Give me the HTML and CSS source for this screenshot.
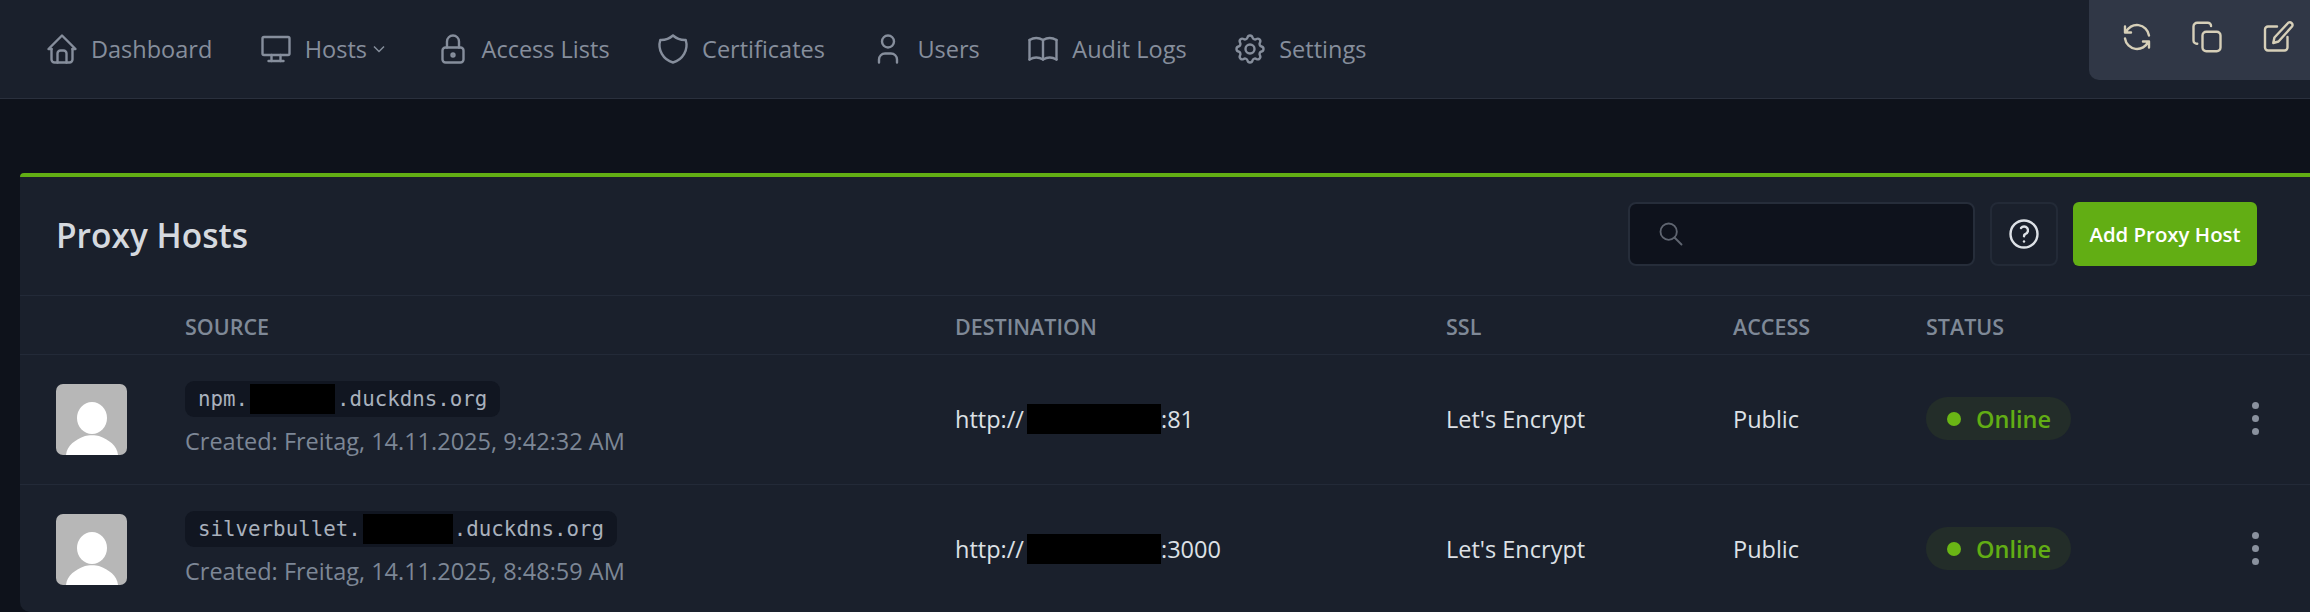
FILE: index.html
```html
<!DOCTYPE html>
<html lang="en">

<head>
    <meta charset="UTF-8">
    <meta name="viewport" content="width=device-width, initial-scale=1.0">
    <title>Proxy Hosts</title>
    <link rel="stylesheet" href="styles.css">
</head>

<body>
    <div class="header">
        <a class="navItem">
            <svg class="icon" viewBox="0 0 24 24"><path d="M5 12l-2 0l9 -9l9 9l-2 0" /><path d="M5 12v7a2 2 0 0 0 2 2h10a2 2 0 0 0 2 -2v-7" /><path d="M9 21v-6a2 2 0 0 1 2 -2h2a2 2 0 0 1 2 2v6" /></svg>
            <span>Dashboard</span>
        </a>
        <a class="navItem">
            <svg class="icon" viewBox="0 0 24 24"><path d="M3 5a1 1 0 0 1 1 -1h16a1 1 0 0 1 1 1v10a1 1 0 0 1 -1 1h-16a1 1 0 0 1 -1 -1v-10z" /><path d="M7 20h10" /><path d="M9 16v4" /><path d="M15 16v4" /></svg>
            <span>Hosts</span>
            <svg class="chevron" viewBox="0 0 24 24"><path d="M6 9l6 6l6 -6" /></svg>
        </a>
        <a class="navItem">
            <svg class="icon" viewBox="0 0 24 24"><path d="M5 13a2 2 0 0 1 2 -2h10a2 2 0 0 1 2 2v6a2 2 0 0 1 -2 2h-10a2 2 0 0 1 -2 -2v-6z" /><path d="M11 16a1 1 0 1 0 2 0a1 1 0 0 0 -2 0" /><path d="M8 11v-4a4 4 0 1 1 8 0v4" /></svg>
            <span>Access Lists</span>
        </a>
        <a class="navItem">
            <svg class="icon" viewBox="0 0 24 24"><path d="M12 3a12 12 0 0 0 8.5 3a12 12 0 0 1 -8.5 15a12 12 0 0 1 -8.5 -15a12 12 0 0 0 8.5 -3" /></svg>
            <span>Certificates</span>
        </a>
        <a class="navItem">
            <svg class="icon" viewBox="0 0 24 24"><path d="M8 7a4 4 0 1 0 8 0a4 4 0 0 0 -8 0" /><path d="M6 21v-2a4 4 0 0 1 4 -4h4a4 4 0 0 1 4 4v2" /></svg>
            <span>Users</span>
        </a>
        <a class="navItem">
            <svg class="icon" viewBox="0 0 24 24"><path d="M3 19a9 9 0 0 1 9 0a9 9 0 0 1 9 0" /><path d="M3 6a9 9 0 0 1 9 0a9 9 0 0 1 9 0" /><path d="M3 6l0 13" /><path d="M12 6l0 13" /><path d="M21 6l0 13" /></svg>
            <span>Audit Logs</span>
        </a>
        <a class="navItem">
            <svg class="icon" viewBox="0 0 24 24"><path d="M10.325 4.317c.426 -1.756 2.924 -1.756 3.35 0a1.724 1.724 0 0 0 2.573 1.066c1.543 -.94 3.31 .826 2.37 2.37a1.724 1.724 0 0 0 1.065 2.572c1.756 .426 1.756 2.924 0 3.35a1.724 1.724 0 0 0 -1.066 2.573c.94 1.543 -.826 3.31 -2.37 2.37a1.724 1.724 0 0 0 -2.572 1.065c-.426 1.756 -2.924 1.756 -3.35 0a1.724 1.724 0 0 0 -2.573 -1.066c-1.543 .94 -3.31 -.826 -2.37 -2.37a1.724 1.724 0 0 0 -1.065 -2.572c-1.756 -.426 -1.756 -2.924 0 -3.35a1.724 1.724 0 0 0 1.066 -2.573c-.94 -1.543 .826 -3.31 2.37 -2.37c1 .608 2.296 .07 2.572 -1.065z" /><path d="M9 12a3 3 0 1 0 6 0a3 3 0 0 0 -6 0" /></svg>
            <span>Settings</span>
        </a>
    </div>

    <!-- toolbar that floats over the header, top right -->
    <div class="floatBar">
        <svg class="icon" viewBox="0 0 24 24"><path d="M20 11a8.1 8.1 0 0 0 -15.5 -2m-.5 -4v4h4" /><path d="M4 13a8.1 8.1 0 0 0 15.5 2m.5 4v-4h-4" /></svg>
        <svg class="icon" viewBox="0 0 24 24"><path d="M9 11a2.5 2.5 0 0 1 2.5 -2.5h7a2.5 2.5 0 0 1 2.5 2.5v8a2.5 2.5 0 0 1 -2.5 2.5h-7a2.5 2.5 0 0 1 -2.5 -2.5z" /><path d="M5.5 16.5a2.2 2.2 0 0 1 -2.5 -2.2v-9.3a2.5 2.5 0 0 1 2.5 -2.5h7a2.2 2.2 0 0 1 2.2 2.2" /></svg>
        <svg class="icon" viewBox="0 0 24 24"><path d="M12 5h-6a2 2 0 0 0 -2 2v12a2 2 0 0 0 2 2h11a2 2 0 0 0 2 -2v-7" /><path d="M19.5 2.5a1.8 1.8 0 0 1 2.5 2.5l-9 10l-3.5 1l.8 -3.7z" /></svg>
    </div>

    <div class="card">
        <div class="cardHeader">
            <h2>Proxy Hosts</h2>
            <div class="actions">
                <div class="search">
                    <svg class="icon" viewBox="0 0 24 24"><path d="M3 10a7 7 0 1 0 14 0a7 7 0 1 0 -14 0" /><path d="M21 21l-6 -6" /></svg>
                </div>
                <div class="helpBtn">
                    <svg class="icon" viewBox="0 0 24 24"><path d="M3 12a9 9 0 1 0 18 0a9 9 0 1 0 -18 0" /><path d="M12 17l0 .01" /><path d="M12 13.5a1.5 1.5 0 0 1 1 -1.5a2.6 2.6 0 1 0 -3 -4" /></svg>
                </div>
                <div class="addBtn">Add Proxy Host</div>
            </div>
        </div>

        <table class="hosts">
            <colgroup>
                <col class="colAvatar">
                <col class="colSource">
                <col class="colDest">
                <col class="colSsl">
                <col class="colAccess">
                <col class="colStatus">
                <col>
            </colgroup>
            <thead>
                <tr>
                    <th></th>
                    <th>SOURCE</th>
                    <th>DESTINATION</th>
                    <th>SSL</th>
                    <th>ACCESS</th>
                    <th>STATUS</th>
                    <th></th>
                </tr>
            </thead>
            <tbody>
                <tr>
                    <td>
                        <div class="avatar">
                            <svg viewBox="0 0 71 71"><ellipse cx="36" cy="34" rx="15" ry="16" /><path d="M10 71c1 -10 9 -15 19 -19c3 -1 11 -1 14 0c10 4 18 9 19 19z" /></svg>
                        </div>
                    </td>
                    <td>
                        <div class="chip">npm.<span class="redact wideA"></span>.duckdns.org</div>
                        <div class="created">Created: Freitag, 14.11.2025, 9:42:32 AM</div>
                    </td>
                    <td>http://<span class="redact destBox"></span>:81</td>
                    <td>Let's Encrypt</td>
                    <td>Public</td>
                    <td><span class="pill"><i class="dot"></i>Online</span></td>
                    <td><div class="menu"><i></i><i></i><i></i></div></td>
                </tr>
                <tr>
                    <td>
                        <div class="avatar">
                            <svg viewBox="0 0 71 71"><ellipse cx="36" cy="34" rx="15" ry="16" /><path d="M10 71c1 -10 9 -15 19 -19c3 -1 11 -1 14 0c10 4 18 9 19 19z" /></svg>
                        </div>
                    </td>
                    <td>
                        <div class="chip">silverbullet.<span class="redact wideB"></span>.duckdns.org</div>
                        <div class="created">Created: Freitag, 14.11.2025, 8:48:59 AM</div>
                    </td>
                    <td>http://<span class="redact destBox"></span>:3000</td>
                    <td>Let's Encrypt</td>
                    <td>Public</td>
                    <td><span class="pill"><i class="dot"></i>Online</span></td>
                    <td><div class="menu"><i></i><i></i><i></i></div></td>
                </tr>
            </tbody>
        </table>
    </div>
</body>

</html>
```
FILE: styles.css
```css
* {
    box-sizing: border-box;
}

html,
body {
    height: 100%;
}

body {
    margin: 0;
    padding: 0;
    overflow: hidden;
    position: relative;
    background-color: #0e121b;
    color: #dde1e6;
    font-family: "Open Sans", "Noto Sans", sans-serif;
    font-size: 23.5px;
}

.icon {
    width: 36px;
    height: 36px;
    flex: none;
    fill: none;
    stroke: currentColor;
    stroke-width: 1.6;
    stroke-linecap: round;
    stroke-linejoin: round;
}

.header {
    height: 99px;
    padding-left: 44px;
    display: flex;
    align-items: center;
    gap: 45.5px;
    background-color: #1a202c;
    border-bottom: 1px solid #2a303d;
    color: #868e9c;
}

.navItem {
    display: flex;
    align-items: center;
    gap: 11px;
}

.chevron {
    width: 20px;
    height: 20px;
    margin-left: -9px;
    fill: none;
    stroke: currentColor;
    stroke-width: 1.8;
}

.floatBar {
    position: absolute;
    top: 0;
    right: 0;
    width: 221px;
    height: 80px;
    padding: 19px 0 0 30px;
    display: flex;
    gap: 34px;
    background-color: #303746;
    border-bottom-left-radius: 10px;
    color: #d6cfb8;
}

.card {
    margin: 74px 0 0 20px;
    height: 439px;
    background-color: #1a202c;
    border-top: 4px solid #62ae14;
    border-top-left-radius: 4px;
    border-bottom-left-radius: 10px;
    overflow: hidden;
}

.cardHeader {
    height: 118px;
    padding: 25px 53px 0 36px;
    display: flex;
    justify-content: space-between;

    h2 {
        margin: 0;
        height: 64px;
        line-height: 66px;
        font-size: 33.5px;
        font-weight: 600;
        color: #d5d9df;
    }
}

.actions {
    display: flex;
    gap: 15px;
    height: 64px;
}

.search {
    width: 347px;
    padding-left: 27px;
    display: flex;
    align-items: center;
    background-color: #0e121c;
    border: 2px solid #262d3a;
    border-radius: 8px;
    color: #5f6570;

    .icon {
        width: 28px;
        height: 28px;
    }
}

.helpBtn {
    width: 68px;
    display: flex;
    align-items: center;
    justify-content: center;
    border: 2px solid #232a37;
    border-radius: 8px;
    color: #dde1e6;
}

.addBtn {
    width: 184px;
    display: flex;
    align-items: center;
    justify-content: center;
    background-color: #62ae14;
    border-radius: 6px;
    color: #ffffff;
    font-size: 20.4px;
    font-weight: 600;
}

.hosts {
    width: 100%;
    table-layout: fixed;
    border-collapse: collapse;

    th {
        height: 59px;
        padding: 2px 0 0;
        text-align: left;
        font-size: 21.5px;
        font-weight: 600;
        color: #7f8997;
        border-top: 1px solid #232a38;
        border-bottom: 1px solid #232a38;
    }

    td {
        height: 130px;
        padding: 0 0 2px;
        border-bottom: 1px solid #232a38;
    }
}

.colAvatar {
    width: 165px;
}

.colSource {
    width: 770px;
}

.colDest {
    width: 491px;
}

.colSsl {
    width: 287px;
}

.colAccess {
    width: 193px;
}

.colStatus {
    width: 294px;
}

.avatar {
    width: 71px;
    height: 71px;
    margin: 2px 0 0 36px;
    background-color: #b7b7b7;
    border-radius: 7px;
    overflow: hidden;

    svg {
        display: block;
        width: 71px;
        height: 71px;
        fill: #ffffff;
    }
}

.chip {
    display: inline-flex;
    align-items: center;
    height: 36px;
    padding: 0 13px;
    background-color: #111621;
    border-radius: 9px;
    font-family: "DejaVu Sans Mono", monospace;
    font-size: 20.8px;
    color: #a9b1bd;
}

.created {
    margin-top: 8px;
    color: #7d8796;
}

.redact {
    display: inline-block;
    height: 30px;
    background-color: #000000;
    vertical-align: middle;
}

.wideA {
    width: 85px;
    margin: 0 2px;
}

.wideB {
    width: 90px;
    margin: 0 1px 0 2px;
}

.destBox {
    width: 134px;
    margin-left: 3px;
    margin-top: -4px;
}

.pill {
    display: inline-flex;
    align-items: center;
    gap: 15px;
    width: 145px;
    height: 43px;
    padding-left: 21px;
    background-color: #232d29;
    border-radius: 22px;
    color: #62ad14;
    font-weight: 600;
}

.dot {
    width: 14px;
    height: 14px;
    border-radius: 50%;
    background-color: #6ab515;
}

.menu {
    display: flex;
    flex-direction: column;
    align-items: center;
    gap: 6px;
    width: 7px;
    margin-left: 32px;

    i {
        width: 7px;
        height: 7px;
        border-radius: 50%;
        background-color: #8a919e;
    }
}
```
